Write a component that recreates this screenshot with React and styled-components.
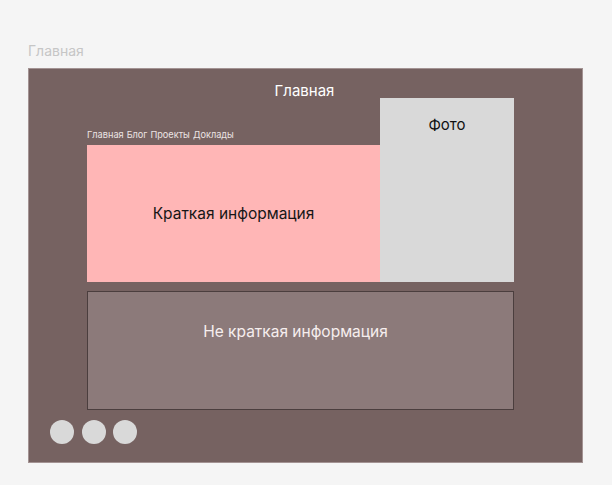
import styled, { createGlobalStyle } from 'styled-components';

const GlobalStyle = createGlobalStyle`
  html, body {
    margin: 0;
    background: #f5f5f5;
    font-family: Inter, "Noto Sans", sans-serif;
  }
`;

const Page = styled.div`
  padding: 42px 0 0 28px;
`;

const PageLabel = styled.div`
  font-size: 14px;
  line-height: 17px;
  color: #c6c6c6;
  margin-bottom: 9px;
`;

const Frame = styled.div`
  box-sizing: border-box;
  width: 555px;
  height: 395px;
  padding-top: 15px;
  background: #766261;
  border: 1px solid #a39393;
`;

const Header = styled.div`
  text-align: center;
  font-size: 15px;
  line-height: 14px;
  color: #ffffff;
  padding-right: 2px;
`;

const Content = styled.div`
  margin-left: 58px;
  width: 427px;
`;

const TopGrid = styled.div`
  display: grid;
  grid-template-columns: 293px 134px;
  height: 184px;
`;

const Lead = styled.div`
  display: flex;
  flex-direction: column;
  justify-content: flex-end;
`;

const Nav = styled.nav`
  display: flex;
  gap: 3px;
  font-size: 9.2px;
  line-height: 11px;
  color: #ece4e4;
  margin-bottom: 5px;
`;

const Summary = styled.div`
  height: 137px;
  display: flex;
  align-items: center;
  justify-content: center;
  background: #ffb6b6;
  color: #161616;
  font-size: 15.5px;
`;

const Photo = styled.div`
  background: #d9d9d9;
  padding-top: 18px;
  text-align: center;
  font-size: 15px;
  line-height: 18px;
  color: #111;
`;

const Details = styled.div`
  box-sizing: border-box;
  margin-top: 9px;
  height: 119px;
  padding: 31px 10px 0 0;
  text-align: center;
  background: #8c7a7a;
  border: 1px solid #4b3e3e;
  color: #f6eeee;
  font-size: 15.5px;
  line-height: 18px;
`;

const Dots = styled.div`
  display: flex;
  gap: 7.5px;
  margin: 10px 0 0 21px;
`;

const Dot = styled.span`
  width: 24px;
  height: 24px;
  border-radius: 50%;
  background: #d9d9d9;
`;

const links = ['Главная', 'Блог', 'Проекты', 'Доклады'];

export default function App() {
  return (
    <Page>
      <GlobalStyle />
      <PageLabel>Главная</PageLabel>
      <Frame>
        <Header>Главная</Header>
        <Content>
          <TopGrid>
            <Lead>
              <Nav>
                {links.map((l) => (
                  <span key={l}>{l}</span>
                ))}
              </Nav>
              <Summary>Краткая информация</Summary>
            </Lead>
            <Photo>Фото</Photo>
          </TopGrid>
          <Details>Не краткая информация</Details>
        </Content>
        <Dots>
          <Dot />
          <Dot />
          <Dot />
        </Dots>
      </Frame>
    </Page>
  );
}
